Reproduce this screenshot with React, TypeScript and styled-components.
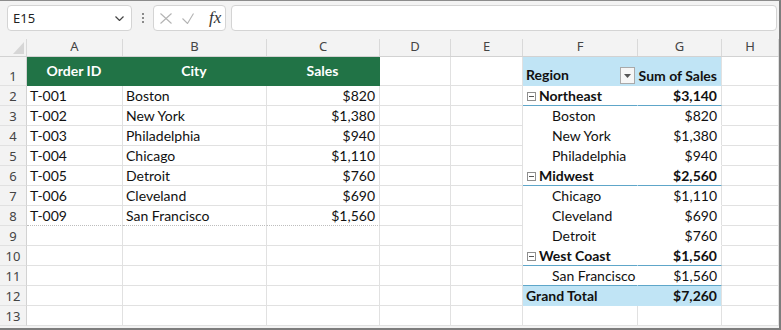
import React from 'react';
import styled, { createGlobalStyle, css } from 'styled-components';

const GlobalStyle = createGlobalStyle`
  body {
    margin: 0;
    background: #fff;
  }
  * {
    box-sizing: border-box;
  }
`;

type Kind = 'plain' | 'green' | 'pivotHead' | 'pivotGroup' | 'pivotItem' | 'pivotTotal';

interface PivotRow {
  kind: 'head' | 'group' | 'item' | 'total';
  label?: string;
  value?: string;
  rule?: boolean;
}

const COLS = ['A', 'B', 'C', 'D', 'E', 'F', 'G', 'H'];
const WIDTHS = [27, 96, 144, 113, 71, 72, 115, 84, 57];

const orders = [
  ['T-001', 'Boston', '$820'],
  ['T-002', 'New York', '$1,380'],
  ['T-003', 'Philadelphia', '$940'],
  ['T-004', 'Chicago', '$1,110'],
  ['T-005', 'Detroit', '$760'],
  ['T-006', 'Cleveland', '$690'],
  ['T-009', 'San Francisco', '$1,560'],
];

const pivot: Record<number, PivotRow> = {
  1: { kind: 'head' },
  2: { kind: 'group', label: 'Northeast', value: '$3,140' },
  3: { kind: 'item', label: 'Boston', value: '$820' },
  4: { kind: 'item', label: 'New York', value: '$1,380' },
  5: { kind: 'item', label: 'Philadelphia', value: '$940' },
  6: { kind: 'group', label: 'Midwest', value: '$2,560' },
  7: { kind: 'item', label: 'Chicago', value: '$1,110' },
  8: { kind: 'item', label: 'Cleveland', value: '$690' },
  9: { kind: 'item', label: 'Detroit', value: '$760' },
  10: { kind: 'group', label: 'West Coast', value: '$1,560' },
  11: { kind: 'item', label: 'San Francisco', value: '$1,560', rule: true },
  12: { kind: 'total', label: 'Grand Total', value: '$7,260' },
};

const App: React.FC = () => {
  const renderCell = (row: number, col: string) => {
    const key = `${row}-${col}`;

    if (row === 1 && 'ABC'.includes(col)) {
      const titles: Record<string, string> = { A: 'Order ID', B: 'City', C: 'Sales' };
      return <Cell key={key} $kind="green">{titles[col]}</Cell>;
    }

    if (row >= 2 && row <= 8 && 'ABC'.includes(col)) {
      const rec = orders[row - 2];
      const idx = 'ABC'.indexOf(col);
      return (
        <Cell key={key} $kind="plain" $right={col === 'C'} $rule={row === 8 ? 'dotted' : undefined}>
          {rec[idx]}
        </Cell>
      );
    }

    const p = pivot[row];
    if (p && (col === 'F' || col === 'G')) {
      const inner = col === 'F';
      if (p.kind === 'head') {
        return inner ? (
          <Cell key={key} $kind="pivotHead" $inner $spread>
            Region
            <DropButton>
              <svg width="7" height="4" viewBox="0 0 7 4">
                <path d="M0 0h7L3.5 4z" fill="#555" />
              </svg>
            </DropButton>
          </Cell>
        ) : (
          <Cell key={key} $kind="pivotHead" $right>Sum of Sales</Cell>
        );
      }
      const kind: Kind = p.kind === 'group' ? 'pivotGroup' : p.kind === 'total' ? 'pivotTotal' : 'pivotItem';
      const rule = p.kind === 'group' || p.rule ? 'blue' : undefined;
      if (inner) {
        return (
          <Cell key={key} $kind={kind} $inner $rule={rule} $indent={p.kind === 'item'}>
            {p.kind === 'group' && (
              <Collapse>
                <span />
              </Collapse>
            )}
            {p.label}
          </Cell>
        );
      }
      return (
        <Cell key={key} $kind={kind} $right $rule={rule}>
          {p.value}
        </Cell>
      );
    }

    return <Cell key={key} $kind="plain" />;
  };

  return (
    <>
      <GlobalStyle />
      <Window>
        <FormulaBar>
          <NameBox>
            E15
            <svg width="9" height="5" viewBox="0 0 9 5">
              <path d="M0.5 0.5l4 4 4-4" fill="none" stroke="#444" strokeWidth="1.2" />
            </svg>
          </NameBox>
          <Grip>
            <i />
            <i />
            <i />
          </Grip>
          <FxBox>
            <svg width="12" height="11" viewBox="0 0 12 11">
              <path d="M0.5 0.5l11 10M11.5 0.5l-11 10" stroke="#b3b3b3" strokeWidth="1.1" />
            </svg>
            <svg width="12" height="11" viewBox="0 0 12 11">
              <path d="M0.5 5.5l5 5 6-10" fill="none" stroke="#b3b3b3" strokeWidth="1.1" />
            </svg>
            <Fx>fx</Fx>
          </FxBox>
          <FormulaInput />
        </FormulaBar>
        <Sheet>
          <HeaderCell>
            <CornerLabel>
              <svg width="11" height="12" viewBox="0 0 11 12">
                <path d="M11 0v12H0z" fill="#d6d6d6" />
              </svg>
            </CornerLabel>
          </HeaderCell>
          {COLS.map((c) => (
            <HeaderCell key={c}>
              <HeaderLabel>{c}</HeaderLabel>
            </HeaderCell>
          ))}
          {Array.from({ length: 13 }, (_, i) => i + 1).map((row) => (
            <React.Fragment key={row}>
              <RowNum>{row}</RowNum>
              {COLS.map((col) => renderCell(row, col))}
            </React.Fragment>
          ))}
        </Sheet>
      </Window>
    </>
  );
};

const Window = styled.div`
  width: 781px;
  height: 330px;
  border-top: 1px solid #8c8c8c;
  border-right: 2px solid #7d7d7d;
  border-bottom: 2px solid #7d7d7d;
  background: #f3f3f3;
  overflow: hidden;
  font-family: "Noto Sans", "Open Sans", sans-serif;
`;

const FormulaBar = styled.div`
  height: 30px;
  display: flex;
  align-items: flex-start;
  padding: 4px 2px 0 7px;
`;

const Box = styled.div`
  height: 26px;
  background: #fff;
  border: 1px solid #d4d4d4;
  border-radius: 4px;
  display: flex;
  align-items: center;
`;

const NameBox = styled(Box)`
  width: 125px;
  justify-content: space-between;
  padding: 0 7px 0 5px;
  font-size: 13px;
  color: #222;
`;

const Grip = styled.div`
  width: 2px;
  height: 26px;
  margin: 0 9px 0 10px;
  display: flex;
  flex-direction: column;
  justify-content: center;
  gap: 2px;

  i {
    width: 2px;
    height: 2px;
    background: #8a8a8a;
  }
`;

const FxBox = styled(Box)`
  width: 73px;
  padding: 0 0 0 6px;
  gap: 10px;
`;

const Fx = styled.span`
  font-family: "Liberation Serif", "DejaVu Serif", serif;
  font-style: italic;
  font-size: 17px;
  color: #333;
  margin-left: 5px;
  letter-spacing: 0;
`;

const FormulaInput = styled(Box)`
  flex: 1;
  margin-left: 5px;
`;

const Sheet = styled.div`
  display: grid;
  grid-template-columns: ${WIDTHS.map((w) => `${w}px`).join(' ')};
  grid-template-rows: 26px 29px repeat(12, 20px);
  background: #fff;
`;

const HeaderCell = styled.div`
  display: flex;
  align-items: flex-end;
  background: #f3f3f3;
  border-bottom: 1px solid #d2d2d2;
`;

const HeaderLabel = styled.div`
  flex: 1;
  height: 17px;
  border-right: 1px solid #d9d9d9;
  text-align: center;
  font-size: 13px;
  line-height: 15px;
  color: #444;
`;

const CornerLabel = styled(HeaderLabel)`
  display: flex;
  justify-content: flex-end;
  align-items: flex-end;
  padding: 0 2px 2px 0;
`;

const RowNum = styled.div`
  display: flex;
  align-items: flex-end;
  justify-content: center;
  background: #f3f3f3;
  border-right: 1px solid #d2d2d2;
  border-bottom: 1px solid #e1e1e1;
  font-size: 13px;
  line-height: 18px;
  color: #444;
`;

const kinds: Record<Kind, ReturnType<typeof css>> = {
  plain: css``,
  green: css`
    background: #217346;
    border-color: #217346;
    color: #fff;
    font-weight: 700;
    justify-content: center;
    align-items: center;
  `,
  pivotHead: css`
    background: #c0e4f5;
    border-bottom-color: #c0e4f5;
    font-weight: 700;
  `,
  pivotGroup: css`
    border-bottom-color: #fff;
    font-weight: 700;
  `,
  pivotItem: css`
    border-bottom-color: #fff;
  `,
  pivotTotal: css`
    background: #c0e4f5;
    border-bottom-color: #c0e4f5;
    font-weight: 700;
  `,
};

const Cell = styled.div<{
  $kind: Kind;
  $right?: boolean;
  $inner?: boolean;
  $spread?: boolean;
  $indent?: boolean;
  $rule?: 'dotted' | 'blue';
}>`
  display: flex;
  align-items: flex-end;
  justify-content: ${(p) => (p.$spread ? 'space-between' : p.$right ? 'flex-end' : 'flex-start')};
  padding: 0 4px 0 3px;
  background: #fff;
  border-right: 1px solid #e1e1e1;
  border-bottom: 1px solid #e1e1e1;
  font-family: Lato, "Liberation Sans", sans-serif;
  font-size: 14px;
  line-height: 18px;
  color: #111;
  white-space: nowrap;
  overflow: hidden;
  ${(p) => kinds[p.$kind]}
  ${(p) => p.$inner && css`border-right-color: ${p.$kind === 'pivotHead' || p.$kind === 'pivotTotal' ? '#c0e4f5' : '#fff'};`}
  ${(p) => p.$indent && css`padding-left: 29px;`}
  ${(p) => p.$spread && css`padding: 0 2px 1px 3px;`}
  ${(p) => p.$rule === 'dotted' && css`border-bottom: 1px dotted #bdbdbd;`}
  ${(p) => p.$rule === 'blue' && css`border-bottom: 1px solid #5ea6c9;`}
`;

const DropButton = styled.div`
  width: 15px;
  height: 17px;
  border: 1px solid #a9a9a9;
  background: #f6f6f6;
  display: flex;
  align-items: center;
  justify-content: center;
`;

const Collapse = styled.div`
  width: 9px;
  height: 9px;
  margin: 0 3px 4px 1px;
  border: 1px solid #8f8f8f;
  display: flex;
  align-items: center;
  justify-content: center;

  span {
    width: 5px;
    height: 1px;
    background: #555;
  }
`;

export default App;
